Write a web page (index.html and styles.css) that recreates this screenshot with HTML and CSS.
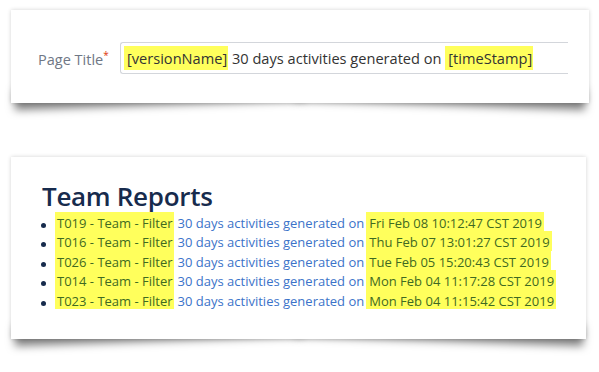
FILE: index.html
```html
<!DOCTYPE html>
<html lang="en">
<head>
    <meta charset="UTF-8">
    <meta name="viewport" content="width=device-width, initial-scale=1.0">
    <title>Team Reports</title>
    <link rel="stylesheet" href="styles.css">
</head>
<body>

<!-- Page title template -->
<div class="card card-title">
    <div class="field">
        <label class="field-label">Page Title<span class="required">*</span></label>
        <div class="field-input">
            <span class="mark">[versionName]</span> 30 days activities generated on <span class="mark">[timeStamp]</span>
        </div>
    </div>
</div>

<!-- Generated page -->
<div class="card card-reports">
    <h1>Team Reports</h1>
    <ul class="reports">
        <li><span class="mark name">T019 - Team - Filter</span><a href="#">30 days activities generated on</a><span class="mark date">Fri Feb 08 10:12:47 CST 2019</span></li>
        <li><span class="mark name">T016 - Team - Filter</span><a href="#">30 days activities generated on</a><span class="mark date">Thu Feb 07 13:01:27 CST 2019</span></li>
        <li><span class="mark name">T026 - Team - Filter</span><a href="#">30 days activities generated on</a><span class="mark date">Tue Feb 05 15:20:43 CST 2019</span></li>
        <li><span class="mark name">T014 - Team - Filter</span><a href="#">30 days activities generated on</a><span class="mark date">Mon Feb 04 11:17:28 CST 2019</span></li>
        <li><span class="mark name">T023 - Team - Filter</span><a href="#">30 days activities generated on</a><span class="mark date">Mon Feb 04 11:15:42 CST 2019</span></li>
    </ul>
</div>

</body>
</html>
```

FILE: styles.css
```css
body {
    font-family: "Open Sans", Arial, sans-serif;
    margin: 0;
    padding: 10px 0 33px 11px;
    background-color: #ffffff;
    color: #333333;
}
.card {
    position: relative;
    background: white;
    box-shadow: 0 0 4px rgba(0, 0, 0, 0.18);
}
/* lifted corner shadow under each card */
.card::before, .card::after {
    content: "";
    position: absolute;
    z-index: -1;
    bottom: 14px;
    width: 50%;
    height: 20px;
    box-shadow: 0 16px 9px rgba(0, 0, 0, 0.5);
}
.card::before {
    left: 3px;
    transform: rotate(-2deg);
}
.card::after {
    right: 3px;
    transform: rotate(2deg);
}
.card-title {
    width: 578px;
    height: 93px;
    box-sizing: border-box;
    padding: 32px 0 0 27px;
}
.field {
    display: flex;
    align-items: center;
}
.field-label {
    width: 82px;
    font-size: 14.5px;
    color: #6f7785;
}
.required {
    color: #de350b;
    font-size: 10px;
    vertical-align: 6px;
}
.field-input {
    width: 448px;
    height: 32px;
    box-sizing: border-box;
    border: 1px solid #d3d6db;
    border-right: none;
    border-radius: 3px 0 0 3px;
    padding: 0 3px;
    font-size: 14.6px;
    line-height: 30px;
    white-space: nowrap;
    color: #333333;
}
.mark {
    background-color: #ffff5c;
}
.field-input .mark {
    display: inline-block;
    line-height: 24px;
    padding: 0 1px 0 3px;
}
.card-reports {
    margin-top: 54px;
    width: 575px;
    height: 182px;
    box-sizing: border-box;
    padding: 24px 0 0 31px;
}
h1 {
    margin: 0;
    font-size: 26px;
    font-weight: 600;
    letter-spacing: -0.3px;
    line-height: 31px;
    color: #172b4d;
}
.reports {
    margin: 0;
    padding: 0;
    list-style: none;
    font-size: 13px;
    white-space: nowrap;
}
.reports li {
    display: flex;
    height: 19.4px;
    color: #172b4d;
}
.reports li::before {
    content: "";
    flex: none;
    width: 5px;
    height: 5px;
    margin: 11px 9px 0 -1px;
    border-radius: 50%;
    background-color: #172b4d;
}
.reports li > * {
    padding-top: 4px;
    line-height: 15px;
}
.reports .mark {
    color: #3f6a22;
}
.reports .name {
    padding-left: 2px;
    padding-right: 1px;
    margin-right: 4px;
}
.reports .date {
    padding-left: 3px;
    padding-right: 2px;
    margin-left: 2px;
}
.reports a {
    color: #3b73c9;
    text-decoration: none;
}
```
